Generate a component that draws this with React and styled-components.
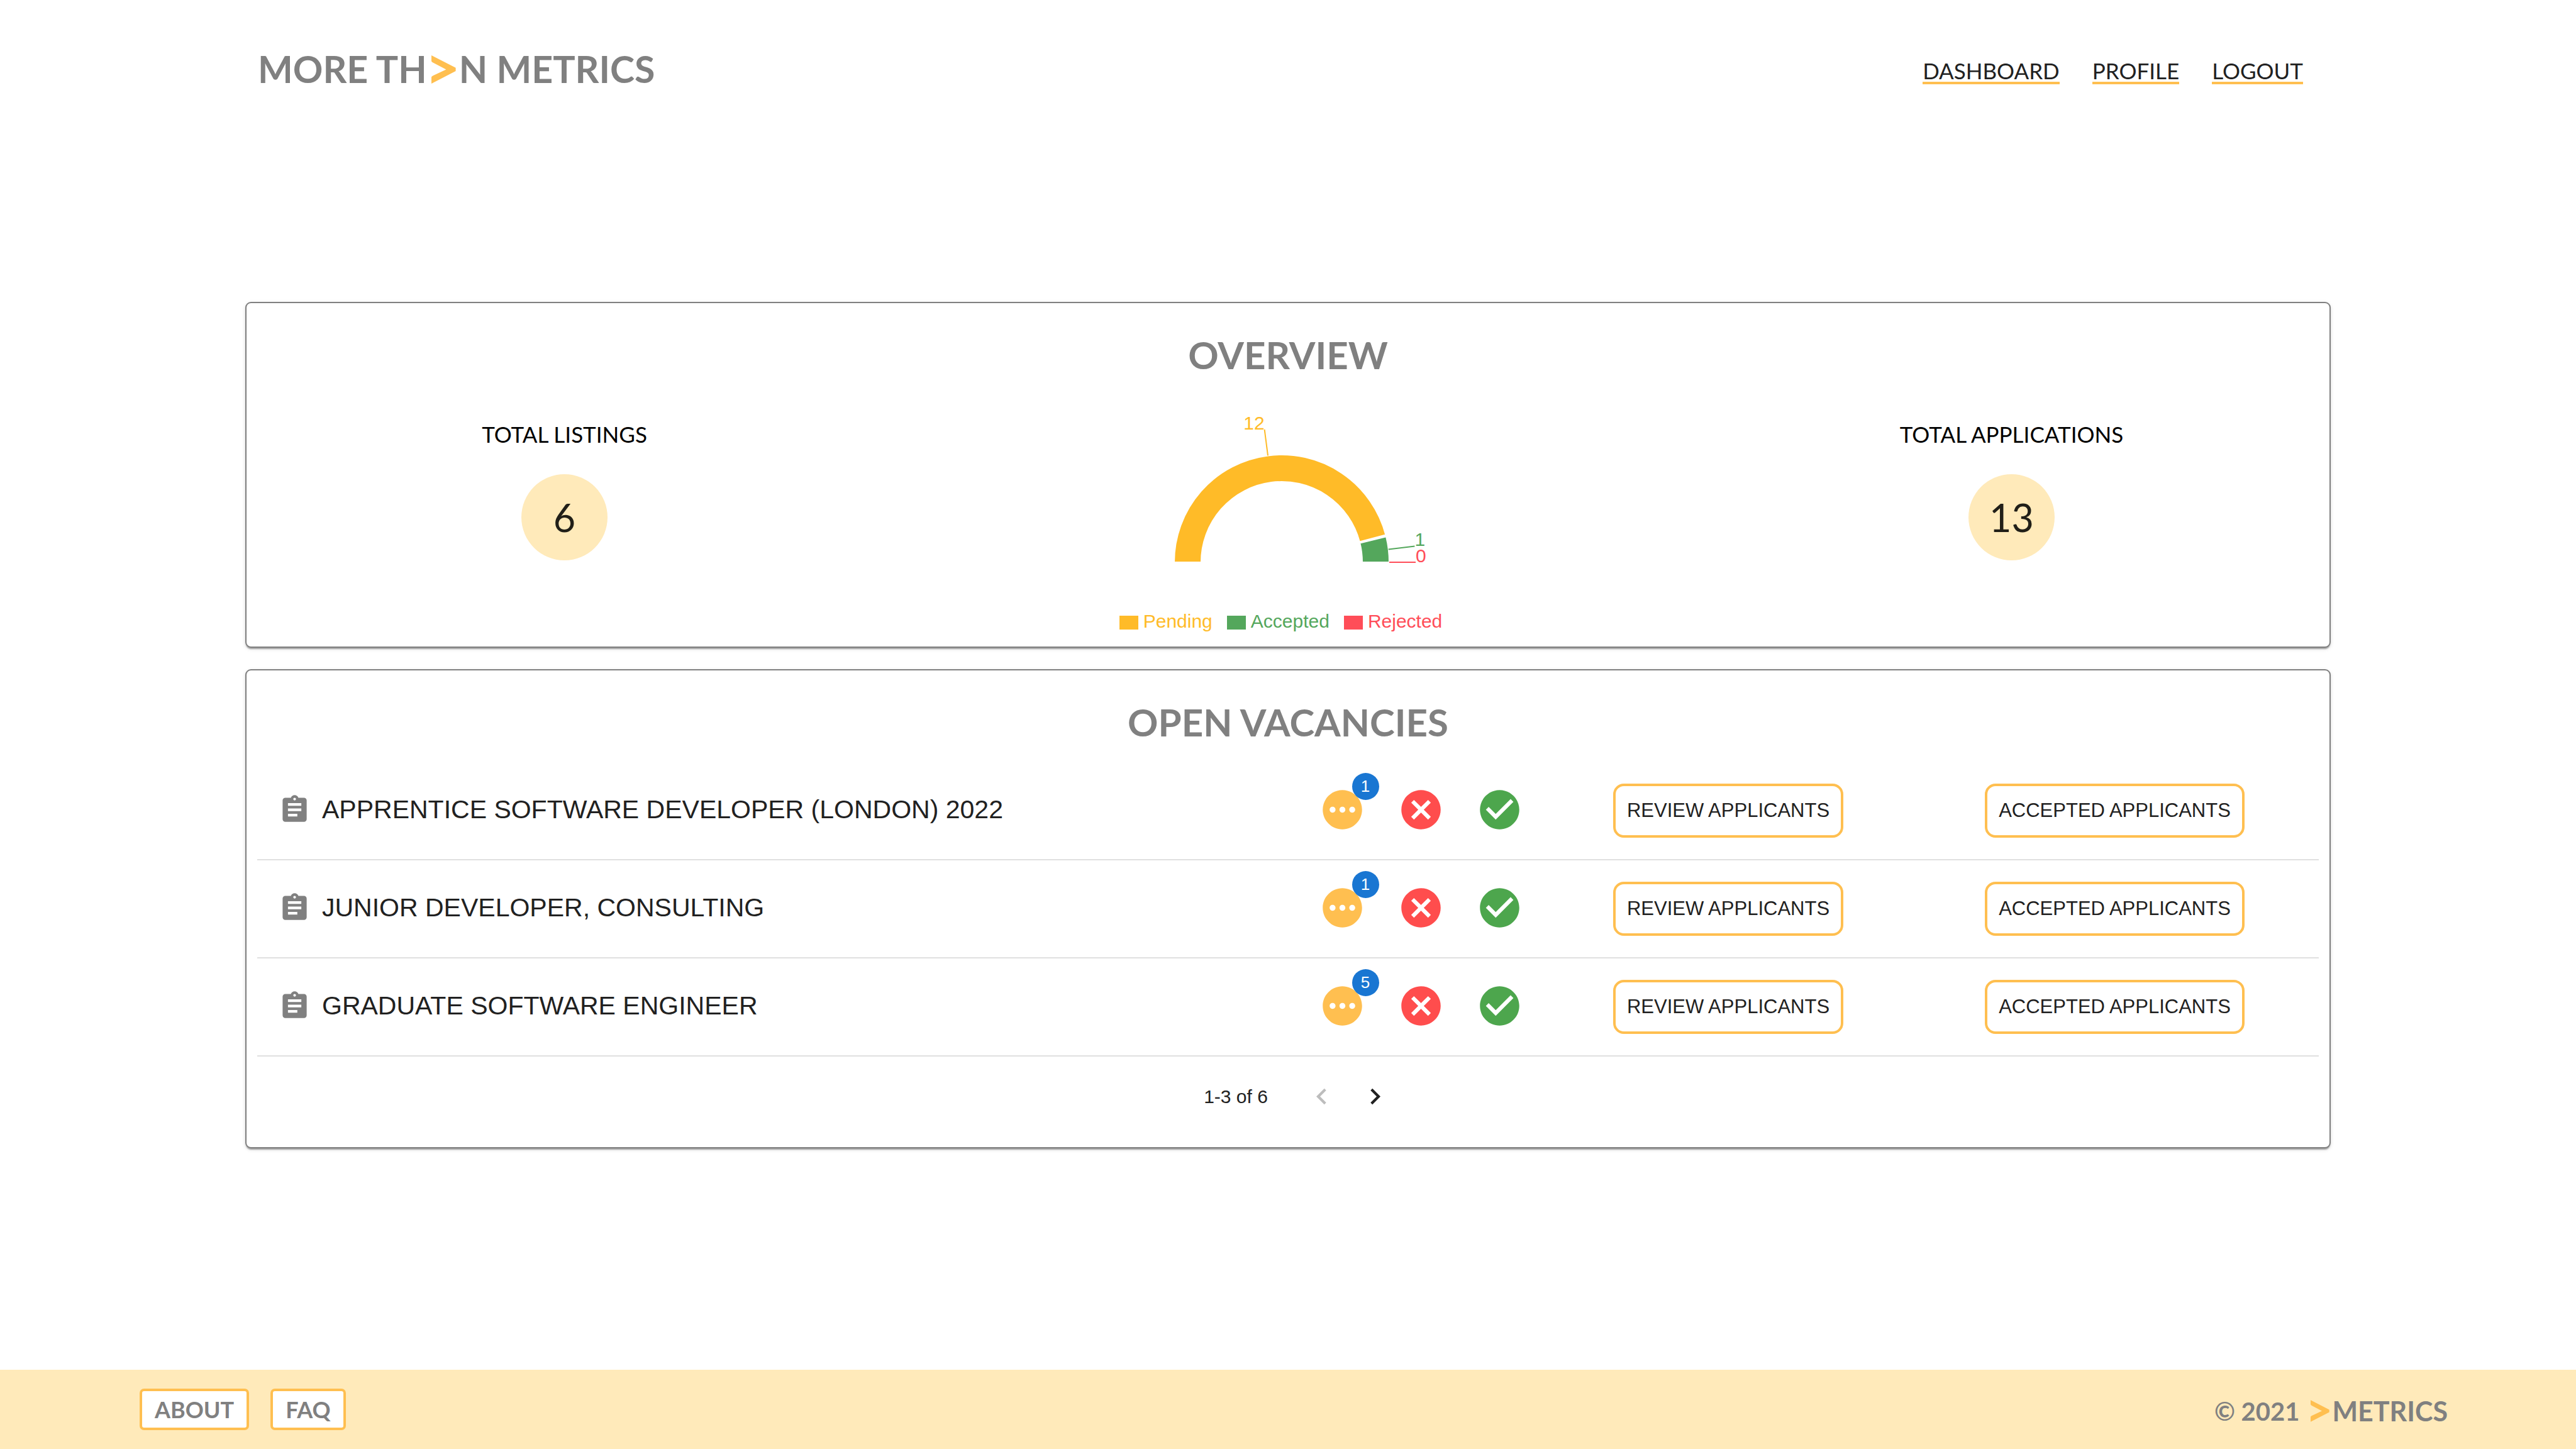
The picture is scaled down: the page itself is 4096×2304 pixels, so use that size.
import React from "react";
import styled, { createGlobalStyle } from "styled-components";

const color = {
  text: "#212121",
  grey: "#808080",
  amber: "#ffbf50",
  cream: "#ffeaba",
  chartAmber: "#ffbb28",
  chartGreen: "#54a75c",
  chartRed: "#ff4d58",
  red: "#ff4d4d",
  green: "#4da64d",
  blue: "#1976d2",
  line: "#e0e0e0",
};

const lato = 'Lato, "Open Sans", sans-serif';
const helvetica = '"Liberation Sans", Arial, sans-serif';

const GlobalStyle = createGlobalStyle`
  *, *::before, *::after { box-sizing: border-box; }
  body {
    margin: 0;
    background: #fff;
    color: ${color.text};
    font-family: ${helvetica};
  }
  h1, h2, h3, p, ul { margin: 0; padding: 0; }
  ul { list-style: none; }
  svg { display: block; }
`;

const Page = styled.div`
  display: flex;
  flex-direction: column;
  min-height: 100vh;
`;

const Header = styled.header`
  display: flex;
  align-items: center;
  justify-content: space-between;
  width: 100%;
  max-width: 3316px;
  margin: 0 auto;
  padding: 74px 44px 0 20px;
`;

const Logo = styled.h1`
  display: flex;
  align-items: center;
  font: 700 59px/72px ${lato};
  color: ${color.grey};
`;

const LogoMark = styled.svg`
  width: 39px;
  height: 45px;
  margin: 0 5px 0 7px;
  fill: ${color.amber};
`;

const Nav = styled.nav`
  display: flex;
  gap: 52px;
  padding-top: 8px;
`;

const NavLink = styled.a`
  border-bottom: 4px solid ${color.amber};
  color: ${color.text};
  font: 400 35px/35px ${lato};
  text-decoration: none;
`;

const Main = styled.main`
  display: flex;
  flex: 1;
  flex-direction: column;
  gap: 34px;
  width: 100%;
  max-width: 3316px;
  margin: 0 auto;
  padding: 334px 0 120px;
`;

const Card = styled.section`
  padding: 46px 17px 0;
  border: 2px solid ${color.grey};
  border-radius: 9px;
  background: #fff;
  box-shadow: 0 4px 2px -2px rgba(0, 0, 0, 0.2), 0 2px 2px rgba(0, 0, 0, 0.14),
    0 2px 6px rgba(0, 0, 0, 0.12);
`;

const CardTitle = styled.h2`
  color: ${color.grey};
  font: 700 60px/72px ${lato};
  text-align: center;
`;

const OverviewGrid = styled.div`
  display: grid;
  grid-template-columns: 1fr 1290px 1fr;
  margin: 0 -17px;
  padding-bottom: 23px;
`;

const Stat = styled.div`
  display: flex;
  flex-direction: column;
  align-items: center;
  gap: 44px;
  padding-top: 70px;
`;

const StatLabel = styled.p`
  color: #000;
  font: 400 35px/40px ${lato};
`;

const StatValue = styled.div`
  display: grid;
  place-items: center;
  width: 137px;
  height: 137px;
  border-radius: 50%;
  background: ${color.cream};
  color: rgba(0, 0, 0, 0.87);
  font: 400 61px/72px ${lato};
`;

const ChartColumn = styled.div`
  display: flex;
  flex-direction: column;
  align-items: center;
`;

const Chart = styled.svg`
  width: 640px;
  height: 371px;
  font: 400 30px ${helvetica};
`;

const Legend = styled.ul`
  display: flex;
`;

const LegendItem = styled.li`
  display: flex;
  align-items: center;
  gap: 8px;
  margin-right: 23px;
  color: ${(p) => p.$tone};
  font-size: 30px;
  line-height: 34px;
`;

const LegendSwatch = styled.span`
  width: 30px;
  height: 22px;
  margin-top: 4px;
  background: currentColor;
`;

const VacancyList = styled.ul`
  margin-top: 28px;
`;

const VacancyRow = styled.li`
  display: grid;
  grid-template-columns: 1fr 396px 580px 649px;
  align-items: center;
  min-height: 156px;
  border-bottom: 2px solid ${color.line};
`;

const VacancyTitle = styled.h3`
  display: flex;
  align-items: center;
  gap: 18px;
  padding: 0 0 4px 34px;
  font-size: 41px;
  font-weight: 400;
  line-height: 56px;
`;

const Icon = styled.svg`
  flex: none;
  width: ${(p) => p.$size}px;
  height: ${(p) => p.$size}px;
  fill: ${(p) => p.$tone || "currentColor"};
`;

const StatusGroup = styled.div`
  display: flex;
  justify-content: center;
  gap: 50px;
  padding: 0 2px 4px 0;
`;

const BadgeAnchor = styled.span`
  position: relative;
`;

const Badge = styled.span`
  position: absolute;
  top: -21px;
  right: -21px;
  display: grid;
  place-items: center;
  width: 43px;
  height: 43px;
  border-radius: 50%;
  background: ${color.blue};
  color: #fff;
  font-size: 26px;
  line-height: 26px;
`;

const ActionCell = styled.div`
  display: flex;
  justify-content: center;
`;

const ActionButton = styled.button`
  height: 86px;
  padding: 0 18px;
  border: 4px solid ${color.amber};
  border-radius: 17px;
  background: #fff;
  color: ${color.text};
  font: 400 31px/40px ${helvetica};
  white-space: nowrap;
`;

const Pagination = styled.div`
  display: flex;
  align-items: center;
  justify-content: center;
  padding: 21px 0 38px 47px;
  font-size: 30px;
  line-height: 34px;
`;

const PageRange = styled.p`
  margin-right: 43px;
`;

const PageButton = styled.button`
  display: grid;
  place-items: center;
  width: 85px;
  height: 85px;
  padding: 0;
  border: 0;
  background: none;
  color: ${color.text};

  &:disabled {
    color: #bdbdbd;
  }
`;

const Footer = styled.footer`
  display: flex;
  align-items: center;
  justify-content: space-between;
  min-height: 126px;
  padding: 0 204px 0 222px;
  background: ${color.cream};
`;

const FooterLinks = styled.nav`
  display: flex;
  gap: 34px;
`;

const FooterLink = styled.a`
  padding: 0 20px;
  border: 4px solid ${color.amber};
  border-radius: 7px;
  background: #fff;
  color: ${color.grey};
  font: 700 36px/58px ${lato};
  text-decoration: none;
`;

const Copyright = styled.p`
  display: flex;
  align-items: center;
  padding-top: 5px;
  color: ${color.grey};
  font: 700 40px/48px ${lato};
`;

const FooterMark = styled(LogoMark)`
  width: 30px;
  height: 35px;
  margin: 0 4px 0 18px;
`;

const FooterBrand = styled.span`
  font-size: 43px;
`;

const ICONS = {
  assignment:
    "M19 3h-4.18C14.4 1.84 13.3 1 12 1c-1.3 0-2.4.84-2.82 2H5c-1.1 0-2 .9-2 2v14c0 1.1.9 2 2 2h14c1.1 0 2-.9 2-2V5c0-1.1-.9-2-2-2zm-7 0c.55 0 1 .45 1 1s-.45 1-1 1-1-.45-1-1 .45-1 1-1zm2 14H7v-2h7v2zm3-4H7v-2h10v2zm0-4H7V7h10v2z",
  pending:
    "M12 2C6.48 2 2 6.48 2 12s4.48 10 10 10 10-4.48 10-10S17.52 2 12 2zM7 13.5c-.83 0-1.5-.67-1.5-1.5s.67-1.5 1.5-1.5 1.5.67 1.5 1.5-.67 1.5-1.5 1.5zm5 0c-.83 0-1.5-.67-1.5-1.5s.67-1.5 1.5-1.5 1.5.67 1.5 1.5-.67 1.5-1.5 1.5zm5 0c-.83 0-1.5-.67-1.5-1.5s.67-1.5 1.5-1.5 1.5.67 1.5 1.5-.67 1.5-1.5 1.5z",
  cancel:
    "M12 2C6.47 2 2 6.47 2 12s4.47 10 10 10 10-4.47 10-10S17.53 2 12 2zm5 13.59L15.59 17 12 13.41 8.41 17 7 15.59 10.59 12 7 8.41 8.41 7 12 10.59 15.59 7 17 8.41 13.41 12 17 15.59z",
  check:
    "M12 2C6.48 2 2 6.48 2 12s4.48 10 10 10 10-4.48 10-10S17.52 2 12 2zm-2 15-5-5 1.41-1.41L10 14.17l7.59-7.59L19 8l-9 9z",
  left: "M15.41 16.59 10.83 12l4.58-4.59L14 6l-6 6 6 6 1.41-1.41z",
  right: "M8.59 16.59 13.17 12 8.59 7.41 10 6l6 6-6 6-1.41-1.41z",
};

function MaterialIcon({ name, size, tone }) {
  return (
    <Icon viewBox="0 0 24 24" $size={size} $tone={tone} aria-hidden="true">
      <path d={ICONS[name]} />
    </Icon>
  );
}

function Chevron({ as: Mark = LogoMark }) {
  return (
    <Mark viewBox="0 0 39 45" aria-hidden="true">
      <path d="M0 0 38.6 19.8V25L0 45V34.4Q.2 33.4 2.6 32.2L23.4 22.6 2.4 11.6Q.2 10.4 0 8.9Z" />
    </Mark>
  );
}

// Half-ring chart: centre, radii and the gap between slices in degrees.
const CX = 310;
const CY = 294;
const OUTER = 171;
const INNER = 128;
const LABEL = 213;
const GAP = 1;

const point = (radius, deg) => {
  const a = (deg * Math.PI) / 180;
  return [CX + radius * Math.cos(a), CY - radius * Math.sin(a)];
};

const slicePath = (from, to) => {
  const [a, b, c, d] = [
    point(OUTER, from),
    point(OUTER, to),
    point(INNER, to),
    point(INNER, from),
  ];
  return `M${a} A${OUTER} ${OUTER} 0 0 1 ${b} L${c} A${INNER} ${INNER} 0 0 0 ${d} Z`;
};

const statuses = [
  { label: "Pending", value: 12, tone: color.chartAmber },
  { label: "Accepted", value: 1, tone: color.chartGreen },
  { label: "Rejected", value: 0, tone: color.chartRed },
];

const total = statuses.reduce((sum, s) => sum + s.value, 0);

const slices = [];
let cursor = 180;
statuses.forEach((s) => {
  const sweep = (s.value / total) * (180 - GAP);
  const from = cursor;
  const to = cursor - sweep;
  slices.push({ ...s, from, to, mid: (from + to) / 2 });
  cursor = Math.max(to - GAP, 0);
});

function StatusChart() {
  return (
    <ChartColumn>
      <Chart viewBox="0 0 640 371" role="img" aria-label="Applications by status">
        {slices.map((s) => {
          const [x1, y1] = point(OUTER, s.mid);
          const [x2, y2] = point(LABEL, s.mid);
          return (
            <g key={s.label}>
              {s.value > 0 && (
                <path d={slicePath(s.from, s.to)} fill={s.tone} stroke="#fff" strokeWidth="2" />
              )}
              <line x1={x1} y1={y1} x2={x2} y2={y2} stroke={s.tone} strokeWidth="2" />
              <text x={x2} y={y2} fill={s.tone} textAnchor={x2 > CX ? "start" : "end"}>
                {s.value}
              </text>
            </g>
          );
        })}
      </Chart>
      <Legend>
        {statuses.map((s) => (
          <LegendItem key={s.label} $tone={s.tone}>
            <LegendSwatch />
            {s.label}
          </LegendItem>
        ))}
      </Legend>
    </ChartColumn>
  );
}

const vacancies = [
  { title: "APPRENTICE SOFTWARE DEVELOPER (LONDON) 2022", pending: 1 },
  { title: "JUNIOR DEVELOPER, CONSULTING", pending: 1 },
  { title: "GRADUATE SOFTWARE ENGINEER", pending: 5 },
];

export default function App() {
  return (
    <Page>
      <GlobalStyle />
      <Header>
        <Logo>
          MORE TH
          <Chevron />N METRICS
        </Logo>
        <Nav>
          <NavLink href="#dashboard">DASHBOARD</NavLink>
          <NavLink href="#profile">PROFILE</NavLink>
          <NavLink href="#logout">LOGOUT</NavLink>
        </Nav>
      </Header>

      <Main>
        <Card>
          <CardTitle>OVERVIEW</CardTitle>
          <OverviewGrid>
            <Stat>
              <StatLabel>TOTAL LISTINGS</StatLabel>
              <StatValue>6</StatValue>
            </Stat>
            <StatusChart />
            <Stat>
              <StatLabel>TOTAL APPLICATIONS</StatLabel>
              <StatValue>13</StatValue>
            </Stat>
          </OverviewGrid>
        </Card>

        <Card>
          <CardTitle>OPEN VACANCIES</CardTitle>
          <VacancyList>
            {vacancies.map((v) => (
              <VacancyRow key={v.title}>
                <VacancyTitle>
                  <MaterialIcon name="assignment" size={51} tone={color.grey} />
                  {v.title}
                </VacancyTitle>
                <StatusGroup>
                  <BadgeAnchor>
                    <MaterialIcon name="pending" size={75} tone={color.amber} />
                    <Badge>{v.pending}</Badge>
                  </BadgeAnchor>
                  <MaterialIcon name="cancel" size={75} tone={color.red} />
                  <MaterialIcon name="check" size={75} tone={color.green} />
                </StatusGroup>
                <ActionCell>
                  <ActionButton type="button">REVIEW APPLICANTS</ActionButton>
                </ActionCell>
                <ActionCell>
                  <ActionButton type="button">ACCEPTED APPLICANTS</ActionButton>
                </ActionCell>
              </VacancyRow>
            ))}
          </VacancyList>
          <Pagination>
            <PageRange>1-3 of 6</PageRange>
            <PageButton type="button" aria-label="Previous page" disabled>
              <MaterialIcon name="left" size={51} />
            </PageButton>
            <PageButton type="button" aria-label="Next page">
              <MaterialIcon name="right" size={51} />
            </PageButton>
          </Pagination>
        </Card>
      </Main>

      <Footer>
        <FooterLinks>
          <FooterLink href="#about">ABOUT</FooterLink>
          <FooterLink href="#faq">FAQ</FooterLink>
        </FooterLinks>
        <Copyright>
          © 2021
          <Chevron as={FooterMark} />
          <FooterBrand>METRICS</FooterBrand>
        </Copyright>
      </Footer>
    </Page>
  );
}
